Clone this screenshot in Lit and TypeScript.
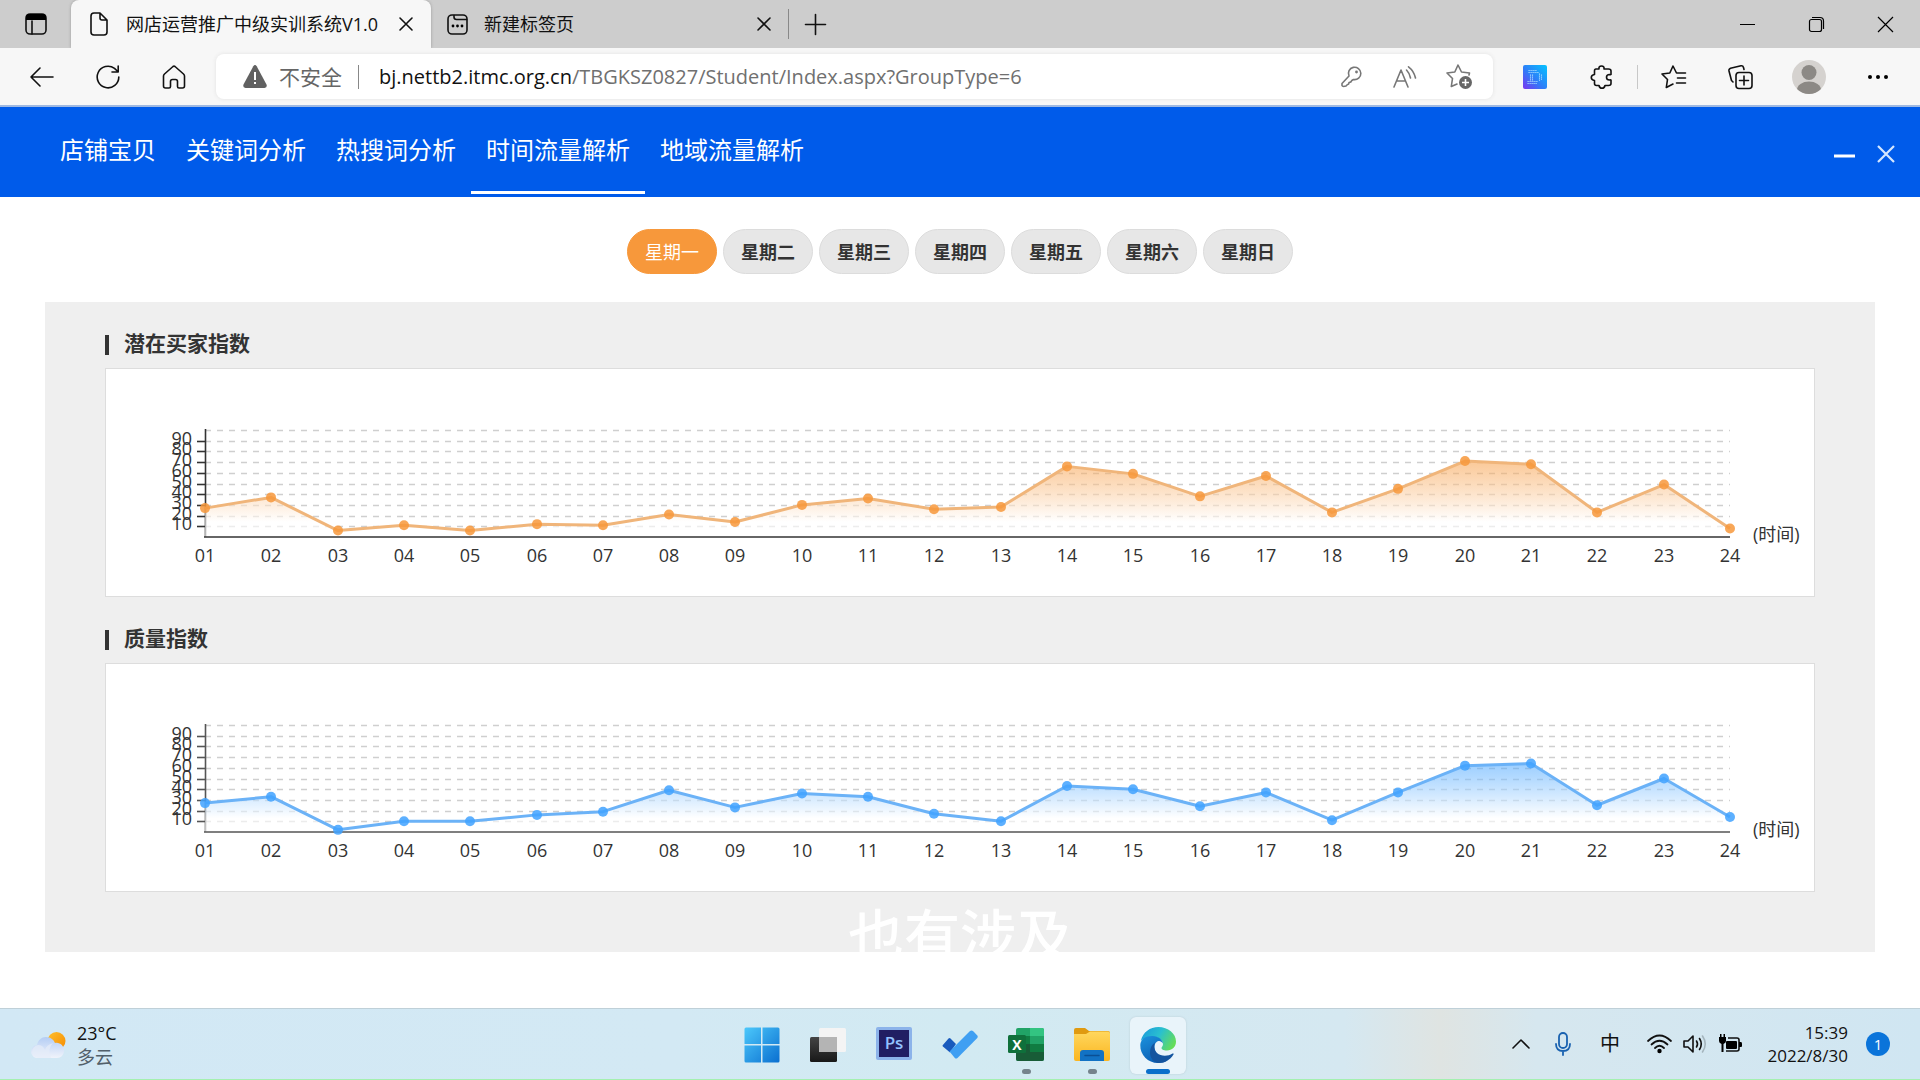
import { LitElement, html, svg, css, nothing, TemplateResult } from "lit";
import { customElement, property, state } from "lit/decorators.js";
import { classMap } from "lit/directives/class-map.js";

const FONT = css`"Open Sans", "Noto Sans CJK SC", sans-serif`;

const resetStyles = css`
  * { box-sizing: border-box; }
  button {
    border: 0; margin: 0; padding: 0; background: none; color: inherit; font: inherit;
    display: flex; align-items: center; justify-content: center; cursor: pointer;
  }
  svg { display: block; overflow: visible; }
  .line { fill: none; stroke: currentColor; stroke-width: 1.6; stroke-linecap: round; stroke-linejoin: round; }
`;

/* ---------- line chart ---------- */

@customElement("hour-chart")
export class HourChart extends LitElement {
  @property({ attribute: false }) values: number[] = [];
  @property() color = "#000";
  @property() stroke = "#000";
  @property() axis = "#333";
  @property() label = "";
  @state() private width = 1708;
  private observer?: ResizeObserver;

  static styles = css`
    :host { display: block; height: 227px; }
    .plot { display: block; width: 100%; height: 100%; font: 18px ${FONT}; }
    .tick { fill: #333; }
    .grid { stroke: #cfcfcf; stroke-width: 1.5; stroke-dasharray: 6 6; }
  `;

  connectedCallback() {
    super.connectedCallback();
    this.observer = new ResizeObserver(() => { this.width = this.clientWidth || this.width; });
    this.observer.observe(this);
  }

  disconnectedCallback() {
    this.observer?.disconnect();
    super.disconnectedCallback();
  }

  render() {
    const left = 99, right = this.width - 84, top = 61, bottom = 168;
    const step = (right - left) / (this.values.length - 1);
    const x = (i: number) => Math.round(left + i * step);
    const y = (v: number) => bottom - (v * (bottom - top)) / 100;
    const points = this.values.map((v, i) => `${x(i)},${y(v)}`).join(" ");
    const levels = [10, 20, 30, 40, 50, 60, 70, 80, 90];
    return html`
      <svg class="plot" role="img" aria-label=${this.label}>
        <defs>
          <linearGradient id="fill" gradientUnits="userSpaceOnUse" x1="0" x2="0" y1=${y(Math.max(...this.values))} y2=${bottom}>
            <stop offset="0" stop-color=${this.color} stop-opacity="0.52"></stop>
            <stop offset="0.8" stop-color="#fff" stop-opacity="0.6"></stop>
            <stop offset="1" stop-color="#fff" stop-opacity="0.65"></stop>
          </linearGradient>
        </defs>
        ${[...levels, 100].map((v) => svg`<line class="grid" x1=${left} x2=${right} y1=${Math.round(y(v)) + 0.5} y2=${Math.round(y(v)) + 0.5}></line>`)}
        <g stroke=${this.axis} stroke-width="1.6">
          <line x1=${left + 0.5} x2=${left + 0.5} y1=${top - 1} y2=${bottom}></line>
          ${levels.map((v) => svg`<line x1=${left - 8} x2=${left} y1=${Math.round(y(v)) + 0.5} y2=${Math.round(y(v)) + 0.5}></line>`)}
        </g>
        ${levels.map((v) => svg`<text class="tick" x=${left - 13} y=${Math.round(y(v)) + 4} text-anchor="end">${v}</text>`)}
        <polygon fill="url(#fill)" points="${left},${bottom} ${points} ${right},${bottom}"></polygon>
        <line x1=${left - 1} x2=${right} y1=${bottom} y2=${bottom} stroke=${this.axis} stroke-width="1.6"></line>
        <polyline fill="none" stroke=${this.stroke} stroke-width="3" stroke-linejoin="round" points=${points}></polyline>
        ${this.values.map((v, i) => svg`
          <circle cx=${x(i)} cy=${y(v)} r="5" fill=${this.color} fill-opacity="0.85"></circle>
          <text class="tick" x=${x(i)} y=${bottom + 25} text-anchor="middle">${String(i + 1).padStart(2, "0")}</text>`)}
        <text class="tick" x=${right + 23} y=${bottom + 4}>(时间)</text>
      </svg>`;
  }
}

/* ---------- browser chrome ---------- */

const closeGlyph = html`
  <svg width="14" height="14" viewBox="0 0 14 14"><path class="line" d="M1 1L13 13M13 1L1 13"></path></svg>`;

@customElement("browser-bar")
export class BrowserBar extends LitElement {
  static styles = [resetStyles, css`
    :host { display: block; color: #111; font: 18px/24px ${FONT}; }
    .tabs { display: flex; align-items: stretch; height: 48px; background: #cdcdcd; }
    .tabs-menu { width: 71px; }
    .tab { display: flex; align-items: center; padding-right: 17px; }
    .tab-current { width: 360px; padding-left: 19px; gap: 18px; background: #f7f7f7; border-radius: 8px 8px 0 0; box-shadow: 0 0 3px #999; clip-path: inset(0 -3px 0 -3px); }
    .tab-other { width: 357px; padding-left: 16px; padding-right: 16px; gap: 16px; }
    .tab-title { flex: 1; white-space: nowrap; }
    .tab-close { width: 16px; height: 24px; }
    .rule { width: 1px; height: 30px; align-self: center; background: #888; }
    .new-tab { width: 52px; }
    .window { display: flex; margin-left: auto; }
    .window-button { width: 69px; }
    .tools { display: flex; align-items: center; height: 59px; padding: 0 9px; background: #f7f7f7; border-bottom: 2px solid #9fb9e2; }
    .tool { width: 66px; height: 44px; flex: none; }
    .address { flex: 1; min-width: 0; display: flex; align-items: center; height: 45px; margin: 0 9px; padding: 0 7px 0 27px; background: #fff; border-radius: 8px; box-shadow: 0 0 4px #e2e2e2; font-size: 20px; }
    .warning { font-size: 21px; color: #666; margin-left: 12px; white-space: nowrap; }
    .address-rule { width: 1px; height: 24px; margin: 0 20px 0 16px; background: #888; }
    .url { flex: 1; min-width: 0; line-height: 32px; white-space: nowrap; color: #707070; text-decoration: none; }
    .host { color: #111; }
    .inner { width: 54px; height: 40px; color: #777; flex: none; }
    .tool-rule { width: 1px; height: 24px; margin: 0 3px; background: #c8c8c8; }
    .avatar { margin: 0 3px; }
  `];

  render() {
    return html`
      <div class="tabs">
        <button class="tabs-menu" aria-label="标签页操作菜单">
          <svg width="22" height="22" viewBox="0 0 22 22"><rect class="line" x="1" y="1" width="20" height="20" rx="4"></rect><path d="M1 7V4Q1 1 4 1H18Q21 1 21 4V7Z"></path><path class="line" d="M7 8V21"></path></svg>
        </button>
        <div class="tab tab-current">
          <svg width="18" height="24" viewBox="0 0 18 24"><path class="line" d="M4 1H10L17 8V20Q17 23 14 23H4Q1 23 1 20V4Q1 1 4 1ZM10 1V6Q10 8 12 8H17"></path></svg>
          <span class="tab-title">网店运营推广中级实训系统V1.0</span>
          <button class="tab-close" aria-label="关闭标签页">${closeGlyph}</button>
        </div>
        <div class="tab tab-other">
          <svg width="21" height="21" viewBox="0 0 21 21"><rect class="line" x="1" y="1" width="19" height="19" rx="4"></rect><path class="line" d="M7 1.500V3Q7 5.500 9.500 5.500H19.500"></path><circle cx="6" cy="12" r="1.400"></circle><circle cx="10.500" cy="12" r="1.400"></circle><circle cx="15" cy="12" r="1.400"></circle></svg>
          <span class="tab-title">新建标签页</span>
          <button class="tab-close" aria-label="关闭标签页">${closeGlyph}</button>
        </div>
        <span class="rule"></span>
        <button class="new-tab" aria-label="新建标签页"><svg width="21" height="21" viewBox="0 0 21 21"><path class="line" d="M10.500 .5V20.500M.5 10.500H20.500"></path></svg></button>
        <div class="window">
          <button class="window-button" aria-label="最小化"><svg width="15" height="15" viewBox="0 0 15 15"><path d="M0 7H15V8H0Z"></path></svg></button>
          <button class="window-button" aria-label="还原"><svg width="15" height="15" viewBox="0 0 15 15"><rect x="0.500" y="2.500" width="12" height="12" rx="2" fill="none" stroke="#000" stroke-width="1.2"></rect><path fill="none" stroke="#000" stroke-width="1.2" d="M3 .5H11Q14.500 .5 14.500 4V12"></path></svg></button>
          <button class="window-button" aria-label="关闭"><svg width="15" height="15" viewBox="0 0 15 15"><path fill="none" stroke="#000" stroke-width="1.2" d="M0 0L15 15M15 0L0 15"></path></svg></button>
        </div>
      </div>
      <div class="tools">
        <button class="tool" aria-label="返回"><svg width="24" height="20" viewBox="0 0 24 20"><path class="line" d="M10 1L1 10L10 19M1 10H23"></path></svg></button>
        <button class="tool" aria-label="刷新"><svg width="24" height="24" viewBox="0 0 24 24"><path class="line" d="M22.800 12A10.800 10.800 0 1 1 18.500 3.400L21.800 6.500M22.200 1V7H16"></path></svg></button>
        <button class="tool" aria-label="主页"><svg width="24" height="24" viewBox="0 0 24 24"><path class="line" d="M1.500 11Q1.500 10 2.500 9L11 1.500Q12 .8 13 1.500L21.500 9Q22.500 10 22.500 11V21Q22.500 23 20.500 23H17Q15.500 23 15.500 21.500V16.500Q15.500 14.500 13.500 14.500H10.500Q8.500 14.500 8.500 16.500V21.500Q8.500 23 7 23H3.500Q1.500 23 1.500 21Z"></path></svg></button>
        <div class="address">
          <svg width="24" height="23" viewBox="0 0 24 23"><path fill="#616161" d="M10.300 1.200Q12 -1 13.700 1.200L23.500 19.500Q24.500 22.500 21.500 23H2.500Q-.5 22.500 .5 19.500Z"></path><path fill="#fff" d="M11 7H13V15H11ZM11 17H13V19H11Z"></path></svg>
          <span class="warning">不安全</span>
          <span class="address-rule"></span>
          <a class="url" href="#"><span class="host">bj.nettb2.itmc.org.cn</span>/TBGKSZ0827/Student/Index.aspx?GroupType=6</a>
          <button class="inner" aria-label="密码"><svg width="21" height="20" viewBox="0 0 21 20"><path class="line" d="M8 9A6.200 6.200 0 1 1 12.500 12.500L10.800 13.500Q10.200 15.500 8 15.500Q8 17.500 6.500 17.500L5 19Q1.500 20 1 18.500V16.500Z"></path><circle cx="15.500" cy="5" r="1.400" fill="currentColor"></circle></svg></button>
          <button class="inner" aria-label="朗读此页内容"><svg width="24" height="22" viewBox="0 0 24 22"><path class="line" d="M1 21L8 4L15 21M3.500 15H12.500M13.500 4Q16.500 7 17.500 12M15.500 .8Q21 5 22.500 12"></path></svg></button>
          <button class="inner" aria-label="添加到收藏夹"><svg width="26" height="25" viewBox="0 0 26 25"><path class="line" d="M23 11L23.500 9L15.500 8L12 1L8.800 8L1 9L6.500 14.500L5.300 22.500L11 20"></path><circle cx="19.500" cy="18.500" r="6.500" fill="#666"></circle><path stroke="#fff" stroke-width="1.600" d="M19.500 15V22M16 18.500H23"></path></svg></button>
        </div>
        <button class="tool" aria-label="扩展 D">
          <svg width="24" height="24" viewBox="0 0 24 24"><defs><linearGradient id="d" x1="0" y1="1" x2="1" y2="0"><stop offset="0" stop-color="#7b35f0"></stop><stop offset="0.450" stop-color="#2f7df8"></stop><stop offset="1" stop-color="#05c4ff"></stop></linearGradient></defs><rect width="24" height="24" rx="2" fill="url(#d)"></rect><g fill="none" stroke="#a9dcff" stroke-width="1.100" stroke-dasharray="1.200 .8"><path d="M5.500 5.500H14M5.500 7.500H16M7.500 9.500V16M9.500 9.500V16M4.500 16.500H15M4.500 18.500H14M16.500 8.500V16M18.500 9.500V15"></path></g></svg>
        </button>
        <button class="tool" aria-label="扩展"><svg width="23" height="24" viewBox="0 0 23 24"><path class="line" d="M6 4H9Q8.500 1 11.500 1Q14.500 1 14 4H18.500Q21 4 21 6V9.500Q20.500 10 19.500 9.500Q16.500 9.500 16.500 12.200Q16.500 15 19.500 15Q20.500 14.500 21 15V18.500Q21 20.500 18.500 20.500H15Q14.500 23.300 12 23.300Q9.500 23.300 9 20.500H6.500Q4.500 20.500 4.500 18.500V15.500Q1.300 15 1.300 12.500Q1.300 10 4.500 9.500V6Q4.500 4 6 4Z"></path></svg></button>
        <span class="tool-rule"></span>
        <button class="tool" aria-label="收藏夹"><svg width="26" height="24" viewBox="0 0 26 24"><path class="line" d="M24.500 8H15.500L12 1L8.800 8L1 9L6.500 14.500L5.300 22.500L12 19M16.500 13H24.500M15.500 18H24.500"></path></svg></button>
        <button class="tool" aria-label="集锦"><svg width="25" height="24" viewBox="0 0 25 24"><rect class="line" x="8" y="7.500" width="16" height="16" rx="3"></rect><path class="line" d="M16 11V20M11.500 15.500H20.500M5 17L3.500 15.500L1 6Q.6 4 2.500 3.200L13 .8Q15 .5 15.500 2.500L16 4.500"></path></svg></button>
        <button class="tool avatar" aria-label="个人资料"><svg width="34" height="34" viewBox="0 0 34 34"><defs><clipPath id="c"><circle cx="17" cy="17" r="17"></circle></clipPath></defs><g clip-path="url(#c)"><rect width="34" height="34" fill="#d5d2cf"></rect><circle cx="17" cy="12.500" r="7.500" fill="#8c8985"></circle><ellipse cx="17" cy="30" rx="12" ry="8.500" fill="#8c8985"></ellipse></g></svg></button>
        <button class="tool" aria-label="设置及其他"><svg width="20" height="4" viewBox="0 0 20 4"><circle cx="2" cy="2" r="2"></circle><circle cx="10" cy="2" r="2"></circle><circle cx="18" cy="2" r="2"></circle></svg></button>
      </div>`;
  }
}

/* ---------- page content ---------- */

const NAV = ["店铺宝贝", "关键词分析", "热搜词分析", "时间流量解析", "地域流量解析"];
const DAYS = ["星期一", "星期二", "星期三", "星期四", "星期五", "星期六", "星期日"];
const BUYERS = [27, 37, 6, 11, 6, 12, 11, 21, 14, 30, 36, 26, 28, 66, 59, 38, 57, 23, 45, 71, 68, 23, 49, 8];
const QUALITY = [27, 33, 2, 10, 10, 16, 19, 39, 23, 36, 33, 17, 10, 43, 40, 24, 37, 11, 37, 62, 64, 25, 50, 14];

@customElement("traffic-page")
export class TrafficPage extends LitElement {
  @state() private nav = 3;
  @state() private day = 0;

  static styles = [resetStyles, css`
    :host { display: block; position: relative; background: #fff; color: #333; font: 18px/24px ${FONT}; }
    .header { display: flex; justify-content: space-between; height: 90px; padding: 0 14px 0 45px; background: #005bea; color: #fff; }
    .nav { display: flex; height: 87px; }
    .nav-link { padding: 0 15px; color: #fff; font-size: 24px; line-height: 86px; text-decoration: none; border-bottom: 3px solid transparent; white-space: nowrap; }
    .nav-current { border-color: #fff; }
    .actions { display: flex; align-items: center; padding-top: 3px; }
    .action { width: 41px; height: 40px; color: #d6e8ff; }
    .days { display: flex; justify-content: center; gap: 6px; padding: 32px 0 28px; }
    .day { width: 90px; height: 45px; border: 1px solid #dcdcdc; border-radius: 23px; background: #e7e7e7; font-weight: 700; }
    .day-current { border-color: #f7983b; background: #f7983b; color: #fff; font-weight: 400; }
    .panel { margin: 0 45px; padding: 27px 60px 60px; background: #efefef; }
    .title { display: flex; align-items: center; gap: 15px; margin: 0 0 9px; height: 30px; font-size: 21px; line-height: 30px; padding-bottom: 2px; }
    .title::before { content: ""; width: 4px; height: 20px; margin-top: 4px; background: #333; }
    .card { margin-bottom: 27px; border: 1px solid #ddd; background: #fff; }
    .card:last-child { margin-bottom: 0; }
    .caption { position: absolute; left: 0; right: 0; bottom: 46px; margin: 0; text-align: center; color: #fff; font: 500 56px/60px "Noto Sans CJK SC", sans-serif; pointer-events: none; }
  `];

  render() {
    return html`
      <header class="header">
        <nav class="nav">
          ${NAV.map((name, i) => html`<a href="#" class=${classMap({ "nav-link": true, "nav-current": i === this.nav })} @click=${() => (this.nav = i)}>${name}</a>`)}
        </nav>
        <div class="actions">
          <button class="action" aria-label="最小化"><svg width="21" height="20" viewBox="0 0 21 20"><path fill="#fff" d="M0 10.500H21V13.500H0Z"></path></svg></button>
          <button class="action" aria-label="关闭"><svg width="18" height="18" viewBox="0 0 18 18"><path fill="none" stroke="currentColor" stroke-width="2.2" d="M1 1L17 17M17 1L1 17"></path></svg></button>
        </div>
      </header>
      <div class="days">
        ${DAYS.map((name, i) => html`<button class=${classMap({ day: true, "day-current": i === this.day })} aria-pressed=${i === this.day} @click=${() => (this.day = i)}>${name}</button>`)}
      </div>
      <main class="panel">
        <h2 class="title">潜在买家指数</h2>
        <div class="card"><hour-chart label="潜在买家指数" color="#f7983b" stroke="#f0b57a" axis="#333" .values=${BUYERS}></hour-chart></div>
        <h2 class="title">质量指数</h2>
        <div class="card"><hour-chart label="质量指数" color="#41a2ff" stroke="#6bb2f7" axis="#555" .values=${QUALITY}></hour-chart></div>
      </main>
      <p class="caption">也有涉及</p>`;
  }
}

/* ---------- taskbar ---------- */

interface AppIcon { name: string; running?: boolean; active?: boolean; art: TemplateResult; }

const APPS: AppIcon[] = [
  { name: "开始", art: svg`<defs><linearGradient id="w" x1="0" y1="0" x2="1" y2="1"><stop offset="0" stop-color="#4cc8fb"></stop><stop offset="1" stop-color="#0a6fd0"></stop></linearGradient></defs><path fill="url(#w)" d="M2 .5H17V17H.5V2Q.5 .5 2 .5ZM18.500 .5H34Q35.500 .5 35.500 2V17H18.500ZM.5 18.500H17V35.500H2Q.5 35.500 .5 34ZM18.500 18.500H35.500V34Q35.500 35.500 34 35.500H18.500Z"></path>` },
  { name: "任务视图", art: svg`<defs><linearGradient id="tb" x1="0" y1="0" x2="0" y2="1"><stop offset="0" stop-color="#444"></stop><stop offset="1" stop-color="#181818"></stop></linearGradient></defs><rect x="0" y="10" width="27" height="25" rx="1.500" fill="url(#tb)"></rect><rect x="9" y="1" width="27" height="24" rx="1.500" fill="#f4f4f4"></rect><rect x="9" y="10" width="18" height="15" fill="#b4b4b4"></rect>` },
  { name: "Photoshop", art: svg`<rect x="0" y="0" width="36" height="33" rx="2" fill="#8cb3ea"></rect><rect x="3" y="3" width="30" height="27" fill="#211e63"></rect><text x="18" y="22" text-anchor="middle" font-size="17" font-weight="600" fill="#93c2ff">Ps</text>` },
  { name: "待办", art: svg`<path fill="#185abd" d="M.7 18.200L6.500 11.500Q7.500 10.500 8.500 11.500L14 17L8 25.500L.9 19.500Q.2 19 .7 18.200Z"></path><path fill="#3f9ff2" d="M7.500 24.500L28 4Q29.500 2.800 31 4L35.300 8.500Q36.300 9.800 35.300 11L15.500 31Q14 32.200 12.800 31Z"></path>` },
  { name: "Excel", running: true, art: svg`<rect x="8" y="1" width="28" height="33" rx="2" fill="#21a366"></rect><path fill="#33c481" d="M22 1H34Q36 1 36 3V9H22Z"></path><path fill="#107c41" d="M8 9H22V17H8ZM22 17H36V25H22Z"></path><path fill="#185c37" d="M8 17H22V25H36V32Q36 34 34 34H10Q8 34 8 32Z"></path><rect x="0" y="8" width="18" height="18" rx="1.500" fill="#0f703b"></rect><text x="9" y="22.500" text-anchor="middle" font-size="14" font-weight="700" fill="#fff">X</text>` },
  { name: "文件资源管理器", running: true, art: svg`<defs><linearGradient id="f" x1="0" y1="0" x2="0" y2="1"><stop offset="0" stop-color="#ffd75e"></stop><stop offset="1" stop-color="#fbb621"></stop></linearGradient></defs><path fill="#e09a10" d="M0 3Q0 1 2 1H11L15 4H34Q36 4 36 6V12H0Z"></path><path fill="url(#f)" d="M0 7H12L16 4.500H34Q36 4.500 36 6.500V32Q36 34 34 34H2Q0 34 0 32Z"></path><path fill="#1272c4" d="M6 34V26Q6 23 9 23H27Q30 23 30 26V34Z"></path><path stroke="#0b4f94" stroke-width="1.500" stroke-linecap="round" d="M11 28.500H25"></path>` },
  { name: "Microsoft Edge", active: true, art: svg`<defs><linearGradient id="e1" x1="0" y1="0.200" x2="1" y2="0.600"><stop offset="0" stop-color="#199bdc"></stop><stop offset="0.500" stop-color="#2ac0cf"></stop><stop offset="1" stop-color="#66dd57"></stop></linearGradient><linearGradient id="e2" x1="0" y1="0" x2="0.500" y2="1"><stop offset="0" stop-color="#1b92dd"></stop><stop offset="1" stop-color="#0c5fb4"></stop></linearGradient></defs><path fill="url(#e1)" d="M.8 14C3 5 10 0 18.500 0C28 0 36 6.500 36 14.500C36 20 32 23.500 27 23.500C23 23.500 21.500 22 21.500 21C21.500 20 23 19.500 23 17C23 13 18.500 10 13 10C7 10 2 12.500 .8 14Z"></path><path fill="url(#e2)" d="M.3 18C.5 12 6 8.800 12.500 9C18.500 9.200 22.500 12.500 23 16.500C22 14.500 20 13.700 18.500 14C14.500 15 13.500 20 15.500 24.500C18 29.500 22 32 27 33.500C24 35.300 21 36 18 36C8 36 0 28 .3 18Z"></path><path fill="#14559f" d="M15 15.500C13.500 18.500 14 23 17 26C21 29.500 28 29.500 32.500 26.500Q34.200 26 33.500 27.500C30 33 25 36 19.500 36C13.500 35.500 10 31 10 25.500C10 21 12 17.500 15 15.500Z"></path>` },
];

@customElement("task-bar")
export class TaskBar extends LitElement {
  static styles = [resetStyles, css`
    :host { display: block; color: #111; font: 18px/24px ${FONT}; }
    .bar { display: grid; grid-template-columns: 1fr auto 1fr; align-items: stretch; height: 72px; border-top: 1px solid #bfd0d8; border-bottom: 1px solid #a4f0b0;
      background: linear-gradient(90deg, #d2e8f5 0%, #d3e9f4 35%, #d2eaf2 50%, #d5e8f1 70%, #dfe4e2 75%, #d6e7ef 80%, #d0e6f2 100%); }
    .weather { justify-self: start; padding: 2px 0 0 31px; gap: 11px; text-align: left; }
    .weather-text { display: grid; }
    .muted { color: #52606a; }
    .apps { display: flex; gap: 10px; padding: 8px 0 0; }
    .app { display: grid; grid-template-rows: 52px 5px; justify-items: center; align-items: center; width: 56px; height: 57px; border-radius: 6px; }
    .app-active { background: #e9f4fa; box-shadow: 0 0 2px #b5c8d2; }
    .mark { width: 9px; height: 5px; border-radius: 3px; background: #75838c; }
    .mark-active { width: 24px; background: #0a6fcb; }
    .art { width: 36px; height: 36px; margin-top: 4px; font-family: ${FONT}; }
    .tray { display: flex; justify-content: flex-end; align-items: center; padding-right: 30px; }
    .tray-button { width: 42px; height: 48px; }
    .zh { width: 52px; font-size: 20px; }
    .system { width: 108px; height: 48px; gap: 11px; margin-left: 4px; }
    .clock { margin: 0 18px 0 0; width: 100px; text-align: right; display: grid; justify-content: end; line-height: 23px; font-size: 17px; }
    .badge { width: 24px; height: 24px; border-radius: 12px; background: #0a74da; color: #fff; font-size: 15px; line-height: 24px; }
  `];

  render() {
    return html`
      <footer class="bar">
        <button class="weather">
          <svg width="35" height="26" viewBox="0 0 35 26"><defs><linearGradient id="s" x1="0" y1="0" x2="1" y2="1"><stop offset="0" stop-color="#ffc02e"></stop><stop offset="1" stop-color="#f58a00"></stop></linearGradient><linearGradient id="k" x1="0" y1="0" x2="0" y2="1"><stop offset="0" stop-color="#b4cdf4"></stop><stop offset="1" stop-color="#f0f3fb"></stop></linearGradient></defs><circle cx="25.500" cy="9" r="9" fill="url(#s)"></circle><path fill="url(#k)" d="M7 26A6.500 6.500 0 0 1 6 13C7 8 10.500 5 15 5C19.500 5 23 8 24 11C29 10 33 14 33 18.500C33 23 30 26 26 26Z"></path><path fill="#e6ecf8" opacity="0.700" d="M7 26A6.500 6.500 0 1 1 14 18Q15 13 22 11Q16 17 20 26Z"></path></svg>
          <span class="weather-text"><span>23°C</span><span class="muted">多云</span></span>
        </button>
        <div class="apps">
          ${APPS.map((app) => html`
            <button class=${classMap({ app: true, "app-active": !!app.active })} aria-label=${app.name}>
              <svg class="art" viewBox="0 0 36 36">${app.art}</svg>
              ${app.running || app.active ? html`<span class=${classMap({ mark: true, "mark-active": !!app.active })}></span>` : nothing}
            </button>`)}
        </div>
        <div class="tray">
          <button class="tray-button" aria-label="显示隐藏的图标"><svg width="18" height="10" viewBox="0 0 18 10"><path class="line" d="M1 9L9 1L17 9"></path></svg></button>
          <button class="tray-button" aria-label="麦克风"><svg width="16" height="24" viewBox="0 0 16 24"><g fill="none" stroke="#1a62b0" stroke-width="1.800" stroke-linecap="round"><rect x="4" y="1" width="8" height="15" rx="4"></rect><path d="M1 12Q1 19 8 19Q15 19 15 12M8 19V23"></path></g></svg></button>
          <button class="tray-button zh">中</button>
          <button class="system" aria-label="网络、声音和电池">
            <svg width="25" height="20" viewBox="0 0 25 20"><g fill="none" stroke="#111" stroke-width="1.800" stroke-linecap="round"><path d="M1 7Q12.500 -4 24 7M4.500 10.500Q12.500 3 20.500 10.500M8 14Q12.500 9.500 17 14"></path></g><circle cx="12.500" cy="17" r="2.200"></circle></svg>
            <svg width="24" height="20" viewBox="0 0 24 20"><g fill="none" stroke="#111" stroke-width="1.600" stroke-linejoin="round" stroke-linecap="round"><path d="M1 7H5L10 2V18L5 13H1ZM13.500 7Q15.500 10 13.500 13M16.500 4.500Q20 10 16.500 15.500"></path><path stroke="#a5b5bd" d="M19.500 2Q25 10 19.500 18"></path></g></svg>
            <svg width="24" height="20" viewBox="0 0 24 20"><path d="M1 3H2V0H3.500V3H5.500V0H7V3H8V7Q8 9 5.500 10V18H3.500V10Q1 9 1 7Z"></path><path fill="none" stroke="#111" stroke-width="1.600" d="M10 4H19Q21 4 21 6V15Q21 17 19 17H8"></path><rect x="8" y="7" width="11" height="8" rx="1"></rect><path d="M21 8H23Q24 8 24 9.500V12Q24 13 23 13H21Z"></path></svg>
          </button>
          <button class="clock"><span>15:39</span><span>2022/8/30</span></button>
          <button class="badge" aria-label="1 条通知">1</button>
        </div>
      </footer>`;
  }
}

@customElement("app-root")
export class AppRoot extends LitElement {
  static styles = css`
    :host { display: flex; flex-direction: column; min-height: 100vh; background: #fff; }
    .page { flex: 1; }
  `;

  render() {
    return html`
      <browser-bar></browser-bar>
      <traffic-page class="page"></traffic-page>
      <task-bar></task-bar>`;
  }
}
